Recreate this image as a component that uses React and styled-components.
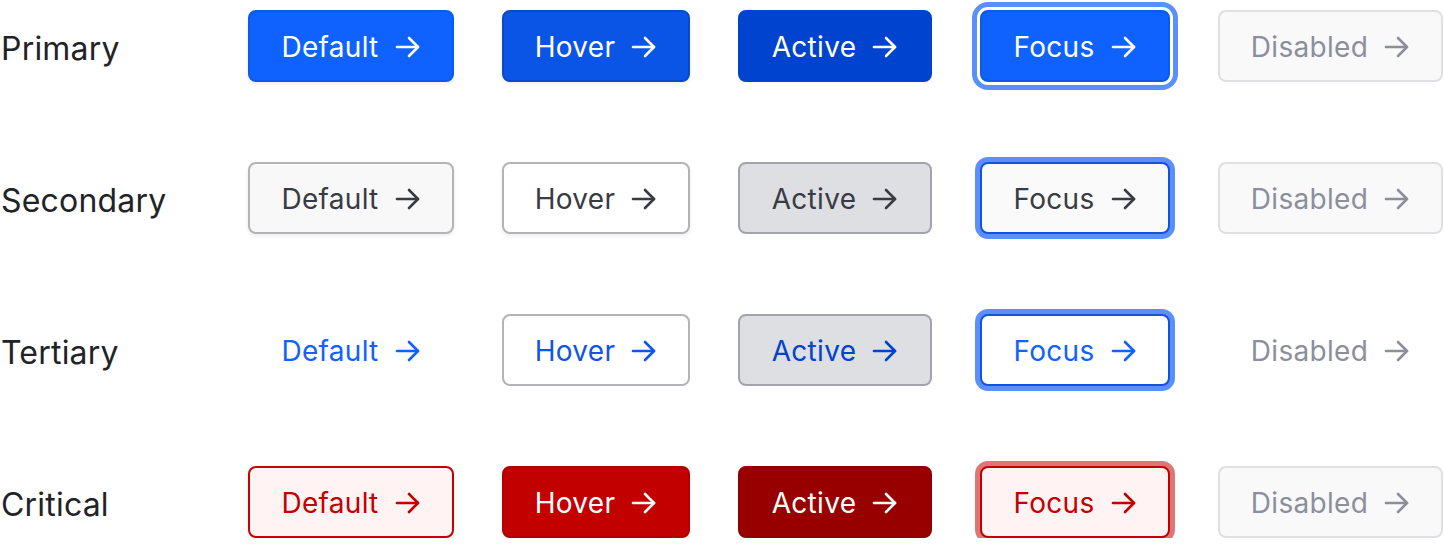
import React from 'react';
import styled, { createGlobalStyle, css } from 'styled-components';

const GlobalStyle = createGlobalStyle`
  html, body {
    margin: 0;
    padding: 0;
    background: #ffffff;
  }
  body {
    font-family: Inter, "Noto Sans", "Liberation Sans", sans-serif;
    -webkit-font-smoothing: antialiased;
  }
`;

const STATES = ['Default', 'Hover', 'Active', 'Focus', 'Disabled'];
const VARIANTS = ['Primary', 'Secondary', 'Tertiary', 'Critical'];

const lift = '0 2px 4px rgba(20, 20, 40, 0.08)';

// colours per variant and state
const looks = {
  Primary: {
    Default: { bg: '#0f62fe', border: '#0c5be8', color: '#ffffff', shadow: lift },
    Hover: { bg: '#0b55e6', border: '#0a49c8', color: '#ffffff', shadow: lift },
    Active: { bg: '#0043ce', border: '#0043ce', color: '#ffffff' },
    Focus: { bg: '#0f62fe', border: '#0c5be8', color: '#ffffff', shadow: '0 0 0 3px #ffffff, 0 0 0 8px #5b8ffb' },
    Disabled: { bg: '#f9f9fa', border: '#e0e0e4', color: '#8b8f9c' },
  },
  Secondary: {
    Default: { bg: '#f8f8f9', border: '#b3b3b8', color: '#393b44', shadow: lift },
    Hover: { bg: '#ffffff', border: '#b3b3b8', color: '#393b44', shadow: lift },
    Active: { bg: '#dedfe3', border: '#a3a4aa', color: '#393b44' },
    Focus: { bg: '#fafafa', border: '#0f55e0', color: '#393b44', shadow: '0 0 0 5px #5b8ffb' },
    Disabled: { bg: '#f9f9fa', border: '#e0e0e4', color: '#8b8f9c' },
  },
  Tertiary: {
    Default: { bg: 'transparent', border: 'transparent', color: '#0f62fe' },
    Hover: { bg: '#ffffff', border: '#b3b3b8', color: '#0f55e8' },
    Active: { bg: '#dedfe3', border: '#a3a4aa', color: '#0043ce' },
    Focus: { bg: '#ffffff', border: '#0f55e0', color: '#0f62fe', shadow: '0 0 0 5px #5b8ffb' },
    Disabled: { bg: 'transparent', border: 'transparent', color: '#8b8f9c' },
  },
  Critical: {
    Default: { bg: '#fff3f3', border: '#c90000', color: '#c30000', shadow: lift },
    Hover: { bg: '#c20000', border: '#b00000', color: '#ffffff', shadow: lift },
    Active: { bg: '#980000', border: '#900000', color: '#ffffff' },
    Focus: { bg: '#fff3f3', border: '#c30000', color: '#c30000', shadow: '0 0 0 5px #de7676' },
    Disabled: { bg: '#f9f9fa', border: '#e0e0e4', color: '#8b8f9c' },
  },
};

const Board = styled.div`
  display: grid;
  grid-template-columns: 200px 206px 188px 194px 190px 225px;
  column-gap: 48px;
  row-gap: 80px;
  padding-top: 10px;
  align-items: center;
`;

const Label = styled.div`
  font-size: 32px;
  font-weight: 400;
  color: #222326;
  padding-left: 1px;
  padding-top: 5px;
  letter-spacing: 0.2px;
`;

const Button = styled.button`
  box-sizing: border-box;
  height: 72px;
  width: 100%;
  display: flex;
  align-items: center;
  justify-content: center;
  gap: 16px;
  padding: 1px 0 0 0;
  font-family: inherit;
  font-size: 28px;
  font-weight: 400;
  letter-spacing: 0.3px;
  border-radius: 8px;
  cursor: pointer;
  ${({ $look }) => css`
    background: ${$look.bg};
    color: ${$look.color};
    border: 2px solid ${$look.border};
    box-shadow: ${$look.shadow || 'none'};
  `}
  &:disabled {
    cursor: default;
  }
`;

const Arrow = () => (
  <svg width="26" height="22" viewBox="0 0 26 22" fill="none" stroke="currentColor" strokeWidth="2.6" strokeLinecap="round" strokeLinejoin="round">
    <path d="M2 11h21" />
    <path d="M14 2l9 9-9 9" />
  </svg>
);

export default function App() {
  return (
    <>
      <GlobalStyle />
      <Board>
        {VARIANTS.map((variant) => (
          <React.Fragment key={variant}>
            <Label>{variant}</Label>
            {STATES.map((state) => (
              <Button
                key={state}
                $look={looks[variant][state]}
                disabled={state === 'Disabled'}
              >
                <span>{state}</span>
                <Arrow />
              </Button>
            ))}
          </React.Fragment>
        ))}
      </Board>
    </>
  );
}
